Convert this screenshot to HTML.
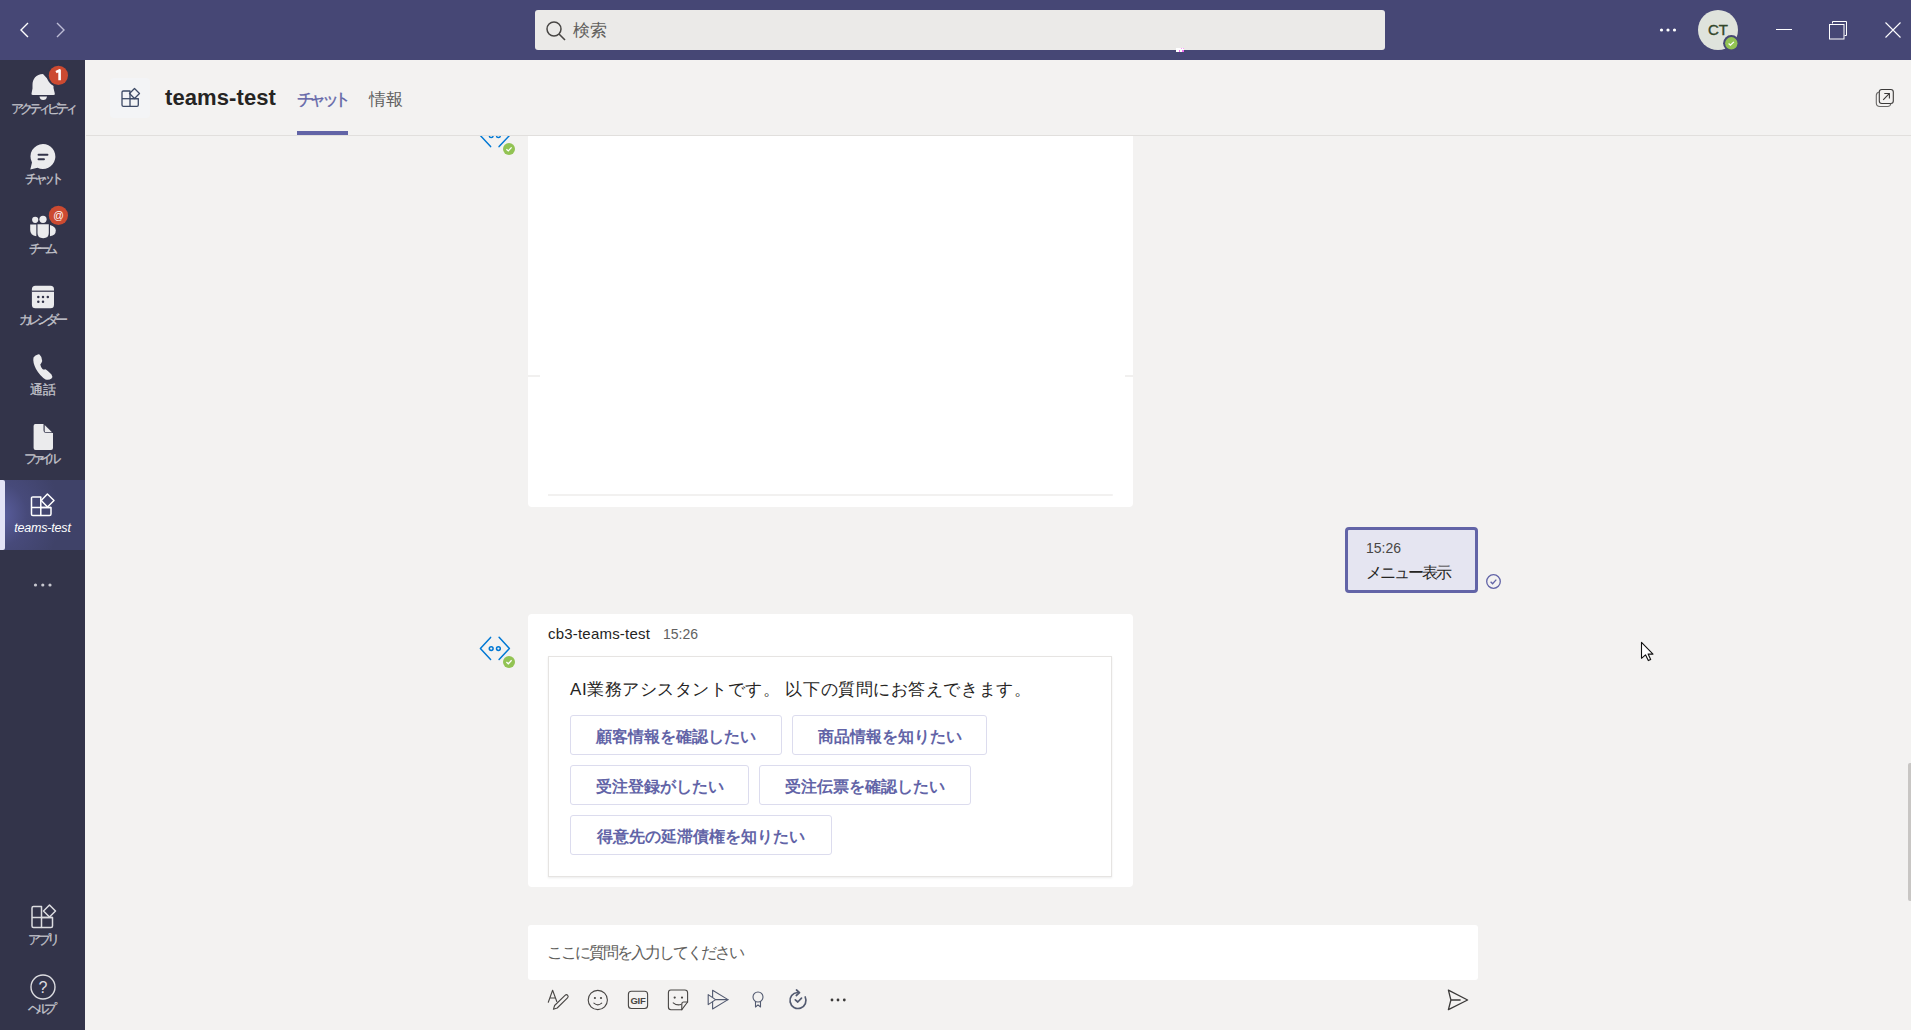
<!DOCTYPE html>
<html><head><meta charset="utf-8">
<style>
*{box-sizing:border-box;margin:0;padding:0}
html,body{width:1911px;height:1030px;overflow:hidden;background:#f3f2f1;font-family:"Liberation Sans",sans-serif;color:#252423}
.abs{position:absolute}
#title{left:0;top:0;width:1911px;height:60px;background:#464775}
#search{left:535px;top:10px;width:850px;height:40px;background:#ebeae8;border-radius:3px}
#search .t{left:38px;top:9px;font-size:17px;color:#605e5c}
#rail{left:0;top:60px;width:85px;height:970px;background:#33344a}
#railline{left:85px;top:60px;width:1px;height:970px;background:#f3f2f1}
.ri{position:absolute;left:0;width:85px;height:70px}
.lbl{left:0;width:85px;text-align:center;font-size:13px;line-height:16px;color:#c4c4cc;letter-spacing:0px;white-space:nowrap;-webkit-text-stroke:0.3px #c4c4cc}
.ri svg{position:absolute}
#hdr{left:86px;top:60px;width:1825px;height:76px;border-bottom:1px solid #e1dfdd;background:#f3f2f1}
.card{position:absolute;background:#fff;border-radius:4px}
.btn{position:absolute;height:40px;border:1px solid #dcdcee;border-radius:3px;background:#fff;color:#6264a7;font-size:16px;font-weight:bold;text-align:center;line-height:42px}
</style></head>
<body>
<!-- title bar -->
<div id="title" class="abs">
  <svg class="abs" style="left:16px;top:20px" width="18" height="20" viewBox="0 0 18 20"><path d="M12 3 L5 10 L12 17" fill="none" stroke="#fff" stroke-width="1.4"/></svg>
  <svg class="abs" style="left:51px;top:20px" width="18" height="20" viewBox="0 0 18 20"><path d="M6 3 L13 10 L6 17" fill="none" stroke="#bdbdd6" stroke-width="1.4"/></svg>
  <div id="search" class="abs">
    <svg class="abs" style="left:10px;top:10px" width="22" height="22" viewBox="0 0 22 22"><circle cx="9" cy="9" r="7" fill="none" stroke="#484644" stroke-width="1.5"/><path d="M14 14 L20 20" stroke="#484644" stroke-width="1.6"/></svg>
    <div class="abs t">検索</div>
  </div>
  <!-- more dots -->
  <svg class="abs" style="left:1657px;top:26px" width="22" height="8" viewBox="0 0 22 8"><circle cx="4.5" cy="4" r="1.6" fill="#fff"/><circle cx="11" cy="4" r="1.6" fill="#fff"/><circle cx="17.5" cy="4" r="1.6" fill="#fff"/></svg>
  <!-- avatar -->
  <div class="abs" style="left:1698px;top:10px;width:40px;height:40px;border-radius:50%;background:#dfe3dc;color:#33472a;font-size:15px;text-align:center;line-height:40px;-webkit-text-stroke:0.4px #33472a">CT</div>
  <svg class="abs" style="left:1722px;top:34px" width="19" height="19" viewBox="0 0 19 19"><circle cx="9.3" cy="9.3" r="8.2" fill="#464775"/><circle cx="9.3" cy="9.3" r="6.2" fill="#92c353"/><path d="M6.6 9.6 L8.4 11.2 L11.9 7.9" fill="none" stroke="#fff" stroke-width="1.3"/></svg>
  <!-- window controls -->
  <div class="abs" style="left:1776px;top:29px;width:16px;height:1px;background:#fff"></div>
  <svg class="abs" style="left:1828px;top:20px" width="20" height="20" viewBox="0 0 20 20"><path d="M4.5 3.5 V1.5 H18.5 V15.5 H16.5" fill="none" stroke="#fff" stroke-width="1"/><rect x="1.5" y="4.5" width="14.5" height="14.5" fill="none" stroke="#fff" stroke-width="1"/></svg>
  <svg class="abs" style="left:1883px;top:20px" width="20" height="20" viewBox="0 0 20 20"><path d="M2.5 2.5 L17.5 17.5 M17.5 2.5 L2.5 17.5" stroke="#fff" stroke-width="1.1"/></svg>
</div>

<!-- left rail -->
<div id="rail" class="abs">
  <!-- activity -->
  <svg class="abs" style="left:0;top:0" width="85" height="620" viewBox="0 60 85 620">
    <g fill="#ebebed">
      <path d="M43 74 C36 74 32.5 79 32.5 85 L32.5 88.5 L31.5 93.5 Q31.2 95 33 95 L53.5 95 Q55.2 95 54.8 93.5 L53.5 88 L53.5 85.5 Z"/>
      <path d="M39.5 96.5 L47 96.5 Q46.5 100 43.2 100 Q40 100 39.5 96.5 Z"/>
    </g>
    <circle cx="58.4" cy="75.4" r="11.5" fill="#33344a"/>
    <circle cx="58.4" cy="75.4" r="9.6" fill="#cc4a31"/>
    <path d="M56 72.2 L59.6 70.3 L59.6 80.2" fill="none" stroke="#fff" stroke-width="2.6" stroke-linejoin="round"/>
    <!-- chat -->
    <path d="M43 144 A12.5 12.5 0 1 1 37.5 167.8 L30.3 169.5 L32 162.5 A12.5 12.5 0 0 1 43 144 Z" fill="#ebebed"/>
    <path d="M38.5 154.8 H47.5 M38.5 159.2 H44" stroke="#33344a" stroke-width="1.9" stroke-linecap="round"/>
    <!-- teams -->
    <g fill="#ebebed">
      <circle cx="35.2" cy="219.8" r="3.1"/>
      <circle cx="43" cy="219.3" r="3.6"/>
      <path d="M30.2 224.5 H36.3 V236.2 Q30.2 235.5 30.2 230 Z"/>
      <path d="M37.5 224.3 H48.8 V233 Q48.8 238.2 43.2 238.2 Q37.5 238.2 37.5 233 Z"/>
      <path d="M50 225 Q55.8 226.5 55.8 230.5 Q55.8 235.5 50 236.2 Z"/>
    </g>
    <circle cx="58.4" cy="215.4" r="11.5" fill="#33344a"/>
    <circle cx="58.4" cy="215.4" r="9.6" fill="#cc4a31"/>
    <text x="58.6" y="219.4" font-size="10.5" font-family="Liberation Sans" fill="#fff" text-anchor="middle">@</text>
    <!-- calendar -->
    <rect x="31.9" y="285.8" width="22.1" height="22.4" rx="3.5" fill="#ebebed"/>
    <rect x="31.9" y="290.6" width="22.1" height="1.2" fill="#33344a"/>
    <g fill="#33344a"><circle cx="38.3" cy="297" r="1.25"/><circle cx="43" cy="297" r="1.25"/><circle cx="47.8" cy="297" r="1.25"/><circle cx="38.3" cy="301.8" r="1.25"/><circle cx="43" cy="301.8" r="1.25"/></g>
    <!-- phone -->
    <path d="M38.5 354.2 Q35 355 33.5 357.5 Q32.5 362 36 369 Q40 376 45.5 379.5 Q49 380.5 51.5 378.5 Q53 376.5 51.5 374.5 Q48.5 371 45.5 369.2 Q43.5 370 42.5 369 Q40.5 366.5 40.3 364.5 Q41.5 363 42.2 361 Q42 356.5 39.5 354.5 Z" fill="#ebebed"/>
    <!-- file -->
    <path d="M35.3 424 H43.5 V430 Q43.5 433 46.5 433 H53 V448 Q53 450 51 450 H35.5 Q33.6 450 33.6 448 V426 Q33.6 424 35.3 424 Z" fill="#ebebed"/>
    <path d="M44.7 425 L52 432.2 H45.8 Q44.7 432.2 44.7 431 Z" fill="#ebebed"/>
  </svg>
  <div class="abs lbl" style="top:41px;letter-spacing:-4px">アクティビティ</div>
  <div class="abs lbl" style="top:111px;letter-spacing:-4.3px">チャット</div>
  <div class="abs lbl" style="top:181px;left:-2px;letter-spacing:-5px">チーム</div>
  <div class="abs lbl" style="top:252px;left:-1px;letter-spacing:-4.2px">カレンダー</div>
  <div class="abs lbl" style="top:322px;left:0px;letter-spacing:0px">通話</div>
  <div class="abs lbl" style="top:391px;left:-3px;letter-spacing:-5px">ファイル</div>
  <div class="abs lbl" style="top:872px;left:0px;letter-spacing:-3.5px">アプリ</div>
  <div class="abs lbl" style="top:941px;left:-3px;letter-spacing:-5px">ヘルプ</div>
  <!-- active teams-test -->
  <div class="abs" style="left:0;top:420px;width:85px;height:70px;background:radial-gradient(ellipse 60px 70px at 0px 35px,#5b5fa0 0%,#474a7a 45%,#3f4268 100%)"></div>
  <div class="abs" style="left:0;top:420px;width:5px;height:70px;background:#e2e2f6;border-radius:0 2px 2px 0"></div>
  <svg class="abs" style="left:0;top:420px" width="85" height="70" viewBox="0 480 85 70">
    <g fill="none" stroke="#fff" stroke-width="1.5" stroke-linejoin="round">
      <path d="M31.5 497.8 Q31.5 497 32.8 497 H40.8 V515.5 H32.8 Q31.5 515.5 31.5 514.2 Z"/>
      <path d="M31.5 507.5 H51"/>
      <path d="M40.8 507.5 H51 V514 Q51 515.5 49.5 515.5 H40.8"/>
      <path d="M47.4 494 L54 500.5 L47.5 507 L41.2 500.5 Z"/>
    </g>
  </svg>
  <div class="abs" style="left:0;top:461px;width:85px;text-align:center;font-size:12.5px;font-style:italic;color:#fff;letter-spacing:-0.2px">teams-test</div>
  <!-- more -->
  <svg class="abs" style="left:30px;top:520px" width="26" height="10" viewBox="0 0 26 10"><circle cx="5.5" cy="5" r="1.6" fill="#c8c8d0"/><circle cx="12.8" cy="5" r="1.6" fill="#c8c8d0"/><circle cx="20" cy="5" r="1.6" fill="#c8c8d0"/></svg>
  <!-- apps bottom -->
  <svg class="abs" style="left:0;top:820px" width="85" height="150" viewBox="0 880 85 150">
    <g fill="none" stroke="#dcdce0" stroke-width="1.5" stroke-linejoin="round">
      <path d="M32 908 Q32 906.5 33.5 906.5 H41.5 V927.5 H33.5 Q32 927.5 32 926 Z"/>
      <path d="M32 917.5 H52.5"/>
      <path d="M41.5 917.5 H52.5 V926 Q52.5 927.5 51 927.5 H41.5"/>
      <path d="M49.5 905 L55.5 911 L49.5 917 L43.5 911 Z"/>
    </g>
    <circle cx="43" cy="987" r="12" fill="none" stroke="#dcdce0" stroke-width="1.4"/>
    <text x="43" y="993" font-size="16" font-family="Liberation Sans" fill="#dcdce0" text-anchor="middle">?</text>
  </svg>
</div>
<div id="railline" class="abs"></div>

<!-- header -->
<div id="hdr" class="abs">
  <div class="abs" style="left:24px;top:18px;width:40px;height:40px;border-radius:4px;background:#f3f4f6"></div>
  <svg class="abs" style="left:24px;top:18px" width="40" height="40" viewBox="110 78 40 40">
    <g fill="none" stroke="#3d4a66" stroke-width="1.3" stroke-linejoin="round">
      <path d="M122 92.3 Q122 91 123.4 91 H130 V106.3 H123.4 Q122 106.3 122 105 Z"/>
      <path d="M122 98.7 H138.3"/>
      <path d="M130 98.7 H138.3 V105 Q138.3 106.3 137 106.3 H130"/>
      <path d="M134.5 88.5 L139.5 93.5 L134.5 98.5 L129.5 93.5 Z"/>
    </g>
  </svg>
  <svg class="abs" style="left:1779px;top:18px" width="40" height="40" viewBox="1865 78 40 40">
    <g fill="none" stroke="#3b3a39" stroke-width="1.1">
      <rect x="1879.3" y="89.5" width="14" height="14" rx="2.5"/>
      <path d="M1879.3 92 Q1876.3 92.5 1876.3 95.5 V103 Q1876.3 106.5 1880 106.5 H1887.5 Q1890.5 106.5 1890.8 103.5" stroke="#6a6968"/>
      <path d="M1883.2 99.8 L1889.2 93.6 M1884.3 93.5 H1889.4 V98.6"/>
    </g>
  </svg>
  <div class="abs" style="left:79px;top:25px;font-size:22px;font-weight:bold;color:#252423;letter-spacing:0.1px">teams-test</div>
  <div class="abs" style="left:211px;top:28px;font-size:17px;color:#6264a7;letter-spacing:-4.6px;-webkit-text-stroke:0.35px #6264a7">チャット</div>
  <div class="abs" style="left:211px;top:71px;width:51px;height:4px;background:#6264a7"></div>
  <div class="abs" style="left:283px;top:28px;font-size:17px;color:#616161">情報</div>
</div>

<!-- card 1 -->
<div class="card" style="left:528px;top:136px;width:605px;height:371px;border-radius:0 0 4px 4px"></div>
<div class="abs" style="left:528px;top:375px;width:12px;height:2px;background:#f1f0ef"></div>
<div class="abs" style="left:1125px;top:375px;width:8px;height:2px;background:#f1f0ef"></div>
<div class="abs" style="left:548px;top:494px;width:565px;height:2px;background:#f2f1f0;border-radius:0 2px 2px 0"></div>

<!-- sent bubble -->
<div class="abs" style="left:1345px;top:527px;width:133px;height:66px;border:3px solid #6264a7;border-radius:4px;background:#e5e5f1">
  <div class="abs" style="left:18px;top:10px;font-size:14px;color:#484644">15:26</div>
  <div class="abs" style="left:18px;top:33px;font-size:16px;color:#252423;letter-spacing:-2px;white-space:nowrap">メニュー表示</div>
</div>

<!-- card 2 -->
<div class="card" style="left:528px;top:614px;width:605px;height:273px">
  <div class="abs" style="left:20px;top:11px;font-size:15px;color:#252423;letter-spacing:0.2px">cb3-teams-test</div>
  <div class="abs" style="left:135px;top:12px;font-size:14px;color:#616161">15:26</div>
  <div class="abs" style="left:20px;top:42px;width:564px;height:221px;border:1px solid #e6e4e2;box-shadow:0 1px 2px rgba(0,0,0,0.08)">
    <div class="abs" style="left:21px;top:21px;font-size:17px;color:#252423;letter-spacing:0.55px;white-space:nowrap">AI業務アシスタントです。 以下の質問にお答えできます。</div>
  </div>
</div>
<div class="btn" style="left:570px;top:715px;width:212px">顧客情報を確認したい</div>
<div class="btn" style="left:792px;top:715px;width:195px">商品情報を知りたい</div>
<div class="btn" style="left:570px;top:765px;width:179px">受注登録がしたい</div>
<div class="btn" style="left:759px;top:765px;width:212px">受注伝票を確認したい</div>
<div class="btn" style="left:570px;top:815px;width:262px">得意先の延滞債権を知りたい</div>

<!-- compose -->
<div class="abs" style="left:528px;top:925px;width:950px;height:55px;background:#fff;border-radius:3px">
  <div class="abs" style="left:19px;top:18px;font-size:16px;color:#605e5c;letter-spacing:-2px">ここに質問を入力してください</div>
</div>


<!-- bot avatar top (cut) -->
<div class="abs" style="left:460px;top:136px;width:70px;height:30px;overflow:hidden">
  <svg class="abs" style="left:0;top:-136px" width="70" height="166" viewBox="460 0 70 166">
    <g fill="none" stroke="#0078d4" stroke-width="1.5" stroke-linecap="round" stroke-linejoin="round">
      <path d="M490.6 124.5 L480.4 135.6 L490.6 146.6"/>
      <path d="M499.1 124.3 L509.4 135.6 L499.1 146.6"/>
      <circle cx="491.2" cy="135.7" r="1.9"/><circle cx="498.4" cy="135.7" r="1.9"/>
    </g>
    <circle cx="509" cy="149" r="7" fill="#f3f2f1"/>
    <circle cx="509" cy="149" r="6" fill="#92c353"/>
    <path d="M506.4 149.2 L508.3 150.9 L511.6 147.4" fill="none" stroke="#fff" stroke-width="1.3"/>
  </svg>
</div>
<!-- bot avatar 2 -->
<svg class="abs" style="left:460px;top:620px" width="70" height="60" viewBox="460 620 70 60">
  <g fill="none" stroke="#0078d4" stroke-width="1.5" stroke-linecap="round" stroke-linejoin="round">
    <path d="M490.6 637.4 L480.4 648.5 L490.6 659.5"/>
    <path d="M499.1 637.2 L509.4 648.5 L499.1 659.5"/>
    <circle cx="491.2" cy="648.6" r="1.9"/><circle cx="498.4" cy="648.6" r="1.9"/>
  </g>
  <circle cx="509" cy="661.9" r="7" fill="#f3f2f1"/>
  <circle cx="509" cy="661.9" r="6" fill="#92c353"/>
  <path d="M506.4 662.1 L508.3 663.8 L511.6 660.3" fill="none" stroke="#fff" stroke-width="1.3"/>
</svg>
<!-- read receipt -->
<svg class="abs" style="left:1483px;top:571px" width="20" height="20" viewBox="1483 571 20 20">
  <circle cx="1493.5" cy="581.5" r="6.8" fill="none" stroke="#6264a7" stroke-width="1.3"/>
  <path d="M1490.6 581.8 L1492.6 583.8 L1496.3 579.6" fill="none" stroke="#6264a7" stroke-width="1.3"/>
</svg>
<!-- cursor -->
<svg class="abs" style="left:1636px;top:638px" width="24" height="28" viewBox="-5.5 -4.3 24 28">
  <path d="M0 0 L0 16 L4 12.5 L6.8 18.3 L9.2 17.2 L6.6 11.8 L11.5 11.8 Z" fill="#fff" stroke="#111" stroke-width="1.1" stroke-linejoin="round"/>
</svg>
<!-- toolbar -->
<svg class="abs" style="left:540px;top:985px" width="320" height="30" viewBox="540 985 320 30">
  <g fill="none" stroke="#484644" stroke-width="1.1" stroke-linejoin="round" stroke-linecap="round">
    <path d="M548.3 1002.2 L552.6 990.3 L556.8 1001.5 M549.8 998 H555.5"/>
    <path d="M553.4 1009.3 L554.6 1005.5 L565 995.3 Q566.5 994 567.7 995.3 Q568.8 996.6 567.5 997.9 L557.2 1008 Z"/>
    <circle cx="597.8" cy="1000" r="9.6"/>
    <path d="M593.9 1003.2 Q597.8 1006.5 601.7 1003.2"/>
    <rect x="628.4" y="991.3" width="19.2" height="17.2" rx="3"/>
    <path d="M670.8 990 H684.8 Q687.6 990 687.6 992.8 V1002 L681.8 1009.7 H671 Q668.4 1009.7 668.4 1007 V992.8 Q668.4 990 670.8 990 Z"/>
    <path d="M681.8 1009.7 V1004 Q681.8 1002 683.8 1002 H687.6"/>
    <path d="M673.2 1002.8 Q676.8 1005.8 681 1004.5"/>
  </g>
  <g fill="#484644"><circle cx="594.9" cy="998" r="1.1"/><circle cx="601" cy="998" r="1.1"/><circle cx="674.7" cy="997.6" r="1.1"/><circle cx="682" cy="997.6" r="1.1"/></g>
  <text x="638" y="1004.2" font-size="9.5" font-weight="bold" font-family="Liberation Sans" fill="#484644" text-anchor="middle" letter-spacing="-0.3">GIF</text>
  <g fill="none" stroke="#525a70" stroke-width="1.1" stroke-linejoin="round" stroke-linecap="round">
    <path d="M712.6 990.3 L728 999.6 L712.6 1009 Z"/>
    <path d="M708.2 994.6 V1004.6 L715.6 999.6 Z" fill="#f3f2f1"/>
    <path d="M715.6 999.6 H728"/>
    <circle cx="758" cy="997" r="5"/>
    <path d="M755.5 1001.5 V1007 L758 1004.8 L760.5 1007 V1001.5"/>
  </g>
  <g fill="none" stroke="#525a70" stroke-width="1.7" stroke-linejoin="round" stroke-linecap="round">
    <path d="M797.5 992.5 A8 8 0 1 0 805.2 997"/>
    <path d="M796.5 990 L799.5 992.7 L796.3 995.5"/>
    <path d="M795.3 999.8 L797.8 1002 L801.5 998.2"/>
  </g>
  <g fill="#3b3a39"><circle cx="832" cy="1000" r="1.4"/><circle cx="838" cy="1000" r="1.4"/><circle cx="844.3" cy="1000" r="1.4"/></g>
</svg>
<svg class="abs" style="left:1440px;top:985px" width="35" height="30" viewBox="1440 985 35 30">
  <path d="M1448.4 990.2 L1467.6 1000 L1448.4 1009.6 L1450.9 1000 Z M1450.9 1000 H1460.6" fill="none" stroke="#3b3a39" stroke-width="1.3" stroke-linejoin="round"/>
</svg>
<div class="abs" style="left:1176px;top:48px;width:8px;height:4px;background:#fff"></div>
<div class="abs" style="left:1181px;top:48px;width:1px;height:1px;background:#f9a0f9"></div>
<div class="abs" style="left:1183px;top:48px;width:1px;height:1px;background:#f9a0f9"></div>
<div class="abs" style="left:1179px;top:50px;width:1px;height:2px;background:#f070f0"></div>
<div class="abs" style="left:1182px;top:50px;width:2px;height:2px;background:#f070f0"></div>
<!-- scrollbar -->
<div class="abs" style="left:1908px;top:763px;width:3px;height:138px;background:#c8c6c4;border-radius:2px 0 0 2px"></div>
</body></html>
